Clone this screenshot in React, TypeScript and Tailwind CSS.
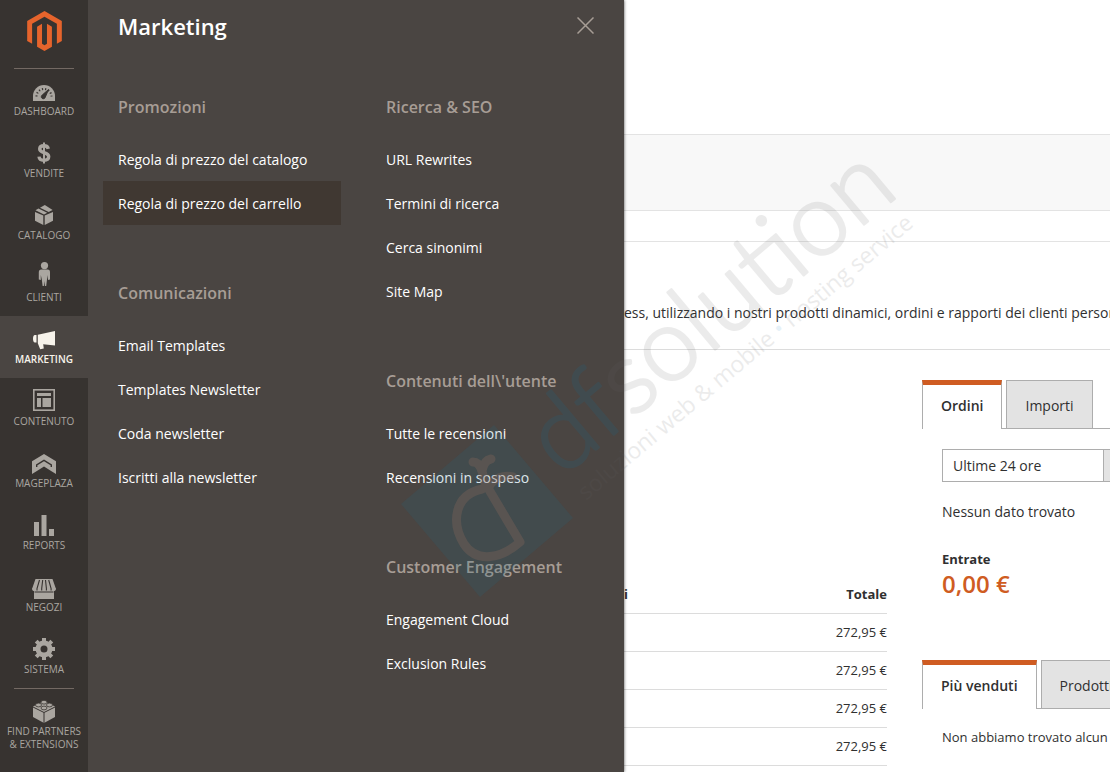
import React from 'react';
import { FaMagento } from 'react-icons/fa';

interface NavItem {
  label: string;
  icon: React.ReactNode;
  active?: boolean;
  divider?: boolean;
}

interface MenuGroup {
  title: string;
  items: string[];
}

// Sidebar glyphs, all drawn on the same 32x29 box
const icons = {
  dashboard: (
    <>
      <path fill="currentColor" d="M5 25v-5a11 11 0 0 1 22 0v5z" />
      <g fill="none" stroke="#373330">
        <path strokeWidth="2" strokeDasharray="1.2 2" d="M8.5 20.5a7.5 7.5 0 0 1 15 0" />
        <path fill="#373330" strokeWidth="1" d="M20.5 13.5l-6.3 5.6a2 2 0 1 0 3 2.3z" />
      </g>
    </>
  ),
  sales: (
    <>
      <path
        fill="none"
        stroke="currentColor"
        strokeWidth="3.4"
        d="M20.300 10.800c-.4-2-2-3-4.400-3-2.600 0-4.200 1.200-4.200 3.200 0 4.600 9 2.500 9 7.600 0 2.300-1.900 3.700-4.800 3.700-2.900 0-4.600-1.300-4.900-3.700"
      />
      <path stroke="currentColor" strokeWidth="2" d="M16 4.500v21" />
    </>
  ),
  catalog: (
    <g fill="currentColor">
      <path d="M7 12l8.300 3.600V25L7 20.800z" />
      <path d="M25 12l-8.300 3.600V25l8.300-4.200z" />
      <path d="M7.500 10.300l3-1.700 8.700 4.200-3.200 1.600z" />
      <path d="M12 7.700l4.800-2.700 7.800 4.900-3.900 2.100z" />
    </g>
  ),
  customers: (
    <g fill="currentColor">
      <circle cx="16.500" cy="3.600" r="3.600" />
      <path d="M13.500 7.500h6c2 0 2.500 1.300 2.500 3v7l-2 .5v-5l-1 4.500-.8 6.500h-1.300l-.5-5-.5 5h-1.300l-.8-6.500-1-4.500v5l-2-.5v-7c0-1.700.7-3 2.700-3z" />
    </g>
  ),
  marketing: (
    <g fill="currentColor">
      <path d="M9.800 10.800L27 7v14.500l-11.800-1.300.6 4.300-3.600.8-2.400-6z" />
      <path d="M8.500 11v7.500H6.800c-1 0-1.800-1.700-1.800-3.800s.8-3.700 1.800-3.700z" />
    </g>
  ),
  content: (
    <>
      <rect x="5.800" y="3.800" width="20.400" height="20.400" fill="none" stroke="currentColor" strokeWidth="1.600" />
      <path fill="currentColor" d="M9 7h14v3H9zM9 12h4v9H9zM14.500 12H23v9h-8.500z" />
    </>
  ),
  mageplaza: (
    <g fill="currentColor">
      <path d="M4 13.300L16 6l12 7.300V26l-4.500-2.700L16 18.600l-7.500 4.700L4 26z" />
      <path fill="none" stroke="#373330" strokeWidth="1.400" d="M8.700 19v-2.200L16 12.300l7.300 4.500V19" />
    </g>
  ),
  reports: <path fill="currentColor" d="M6 12h5v14H6zM13.500 5h5v21h-5zM21 19h5v7h-5z" />,
  stores: (
    <>
      <path fill="currentColor" d="M7.500 7h17L28 17h-2v10H6V17H4z" />
      <path
        fill="currentColor"
        d="M4 16.500h24c0 1.800-1 2.700-2.500 2.700S23 18 23 18s-1 1.200-2.400 1.200S18.300 18 18.300 18s-1 1.200-2.300 1.200S13.700 18 13.700 18s-1 1.200-2.300 1.200S9 18 9 18s-1 1.200-2.500 1.200S4 18.300 4 16.500z"
      />
      <path
        fill="none"
        stroke="#373330"
        strokeWidth="1.100"
        d="M11.500 8L9 16.500v2M14.700 8l-1 8.500v2M17.500 8l.9 8.500v2M20.700 8l2.400 8.500v2M6.500 20h19"
      />
    </>
  ),
  system: (
    <g>
      <circle cx="16" cy="15" r="6" fill="none" stroke="currentColor" strokeWidth="5" />
      <path
        stroke="currentColor"
        strokeWidth="4"
        d="M16 4v4M16 22v4M5 15h4M23 15h4M8.200 7.200l3 3M20.800 19.800l3 3M8.200 22.800l3-3M20.800 10.200l3-3"
      />
    </g>
  ),
  partners: (
    <>
      <path fill="currentColor" d="M5 10.500L16 5l11 5.500V21l-11 6-11-6z" />
      <path fill="none" stroke="#373330" d="M5 11l11 5.500L27 11M16 16.500V27" />
      <g fill="currentColor" stroke="#373330" strokeWidth=".8">
        <ellipse cx="16" cy="6.200" rx="3" ry="1.900" />
        <ellipse cx="10.500" cy="9" rx="3" ry="1.900" />
        <ellipse cx="21.500" cy="9" rx="3" ry="1.900" />
        <ellipse cx="16" cy="12" rx="3" ry="1.900" />
      </g>
    </>
  ),
};

const navItems: NavItem[] = [
  { label: 'Dashboard', icon: icons.dashboard, divider: true },
  { label: 'Vendite', icon: icons.sales },
  { label: 'Catalogo', icon: icons.catalog },
  { label: 'Clienti', icon: icons.customers },
  { label: 'Marketing', icon: icons.marketing, active: true },
  { label: 'Contenuto', icon: icons.content },
  { label: 'Mageplaza', icon: icons.mageplaza },
  { label: 'Reports', icon: icons.reports },
  { label: 'Negozi', icon: icons.stores },
  { label: 'Sistema', icon: icons.system },
  { label: 'Find Partners & Extensions', icon: icons.partners, divider: true },
];

const menuColumns: MenuGroup[][] = [
  [
    { title: 'Promozioni', items: ['Regola di prezzo del catalogo', 'Regola di prezzo del carrello'] },
    {
      title: 'Comunicazioni',
      items: ['Email Templates', 'Templates Newsletter', 'Coda newsletter', 'Iscritti alla newsletter'],
    },
  ],
  [
    { title: 'Ricerca & SEO', items: ['URL Rewrites', 'Termini di ricerca', 'Cerca sinonimi', 'Site Map'] },
    { title: "Contenuti dell\\'utente", items: ['Tutte le recensioni', 'Recensioni in sospeso'] },
    { title: 'Customer Engagement', items: ['Engagement Cloud', 'Exclusion Rules'] },
  ],
];

const currentItem = 'Regola di prezzo del carrello';
const orderTotals = ['272,95 €', '272,95 €', '272,95 €', '272,95 €'];

const Sidebar: React.FC = () => (
  <nav className="z-20 w-[88px] shrink-0 bg-[#373330]">
    <a href="#home" aria-label="Magento" className="flex h-[68px] justify-center pt-[11px] text-[#e6642c]">
      <FaMagento className="h-10 w-[35px]" />
    </a>
    {navItems.map((item) => (
      <a
        key={item.label}
        href={`#${item.label}`}
        className={`relative flex min-h-[62px] flex-col items-center pt-2 text-center text-[10px] leading-[13px] uppercase ${
          item.active ? 'bg-[#4a4542] font-semibold text-[#f7f3eb]' : 'text-[#aaa6a0]'
        }`}
      >
        {item.divider && <span className="absolute top-0 h-px w-[60px] bg-[#736963]" />}
        <svg viewBox="0 0 32 29" className="h-[29px] w-8" aria-hidden="true">
          {item.icon}
        </svg>
        <span className="w-20">{item.label}</span>
      </a>
    ))}
  </nav>
);

const MenuPanel: React.FC = () => (
  <section className="z-10 w-[536px] shrink-0 bg-[#4a4542] px-[15px] pt-[11px] text-white shadow-[0_0_3px_rgba(0,0,0,0.7)]">
    <header className="flex items-start justify-between px-[15px]">
      <h1 className="text-[22px] leading-[30px] font-semibold">Marketing</h1>
      <button type="button" aria-label="Chiudi" className="pt-1.5 text-[#a79d95]">
        <svg viewBox="0 0 17 17" className="size-[17px]" fill="none" stroke="currentColor" strokeWidth="1.500">
          <path d="M.5.5l16 16M16.500.5l-16 16" />
        </svg>
      </button>
    </header>
    <div className="mt-[54px] grid grid-cols-2 gap-[30px]">
      {menuColumns.map((groups, index) => (
        <div key={index} className="flex flex-col gap-14">
          {groups.map((group) => (
            <div key={group.title}>
              <h2 className="mb-[18px] px-[15px] text-base leading-6 font-semibold text-[#a79d95]">{group.title}</h2>
              <ul>
                {group.items.map((item) => (
                  <li key={item}>
                    <a
                      href="#menu"
                      className={`block px-[15px] pt-[13px] pb-[11px] text-sm leading-5 font-medium ${
                        item === currentItem ? 'bg-[#403832]' : ''
                      }`}
                    >
                      {item}
                    </a>
                  </li>
                ))}
              </ul>
            </div>
          ))}
        </div>
      ))}
    </div>
  </section>
);

const Tabs: React.FC<{ labels: string[] }> = ({ labels }) => (
  <div role="tablist" className="flex overflow-hidden whitespace-nowrap">
    {labels.map((label, index) =>
      index === 0 ? (
        <React.Fragment key={label}>
          <button
            type="button"
            role="tab"
            aria-selected="true"
            className="h-[49px] shrink-0 border-x border-t-5 border-x-[#adadad] border-t-[#cf5c22] px-[18px] pb-0.5 text-sm font-semibold"
          >
            {label}
          </button>
          <span className="w-1 shrink-0 border-b border-[#adadad]" />
        </React.Fragment>
      ) : (
        <button
          key={label}
          type="button"
          role="tab"
          aria-selected="false"
          className="h-[49px] shrink-0 border border-[#adadad] bg-[#e3e3e3] px-[18px] pt-0.5 text-sm"
        >
          {label}
        </button>
      ),
    )}
    <span className="flex-1 border-b border-[#adadad]" />
  </div>
);

const Page: React.FC = () => (
  <main className="min-w-0 flex-1 overflow-hidden text-[#303030]">
    <div className="mt-[134px] h-[77px] border-y border-[#e3e3e3] bg-[#f8f8f8]" />
    <div className="h-[31px] border-b border-[#e3e3e3]" />
    <p className="overflow-hidden border-b border-[#dcdcdc] pt-[61px] pb-[26px] text-sm leading-5 whitespace-nowrap">
      ess, utilizzando i nostri prodotti dinamici, ordini e rapporti dei clienti personalizzati.
    </p>
    <div className="flex gap-[35px] pt-[30px]">
      <div className="flex-1 pt-[195px]">
        <table className="w-full text-[13px] leading-5">
          <thead>
            <tr className="h-[38px] border-b border-[#dcdcdc]">
              <th className="text-left font-bold">i</th>
              <th className="text-right font-bold">Totale</th>
            </tr>
          </thead>
          <tbody>
            {orderTotals.map((total, index) => (
              <tr key={index} className="h-[38px] border-b border-[#dcdcdc]">
                <td />
                <td className="text-right">{total}</td>
              </tr>
            ))}
          </tbody>
        </table>
      </div>
      <div className="w-[188px] shrink-0">
        <Tabs labels={['Ordini', 'Importi']} />
        <div className="h-[231px] overflow-hidden pt-5 pl-5">
          <div className="flex h-[33px] w-[194px] border border-[#adadad]">
            <select aria-label="Periodo" className="w-40 shrink-0 appearance-none bg-white px-2.5 text-sm">
              <option>Ultime 24 ore</option>
            </select>
            <span className="flex-1 border-l border-[#adadad] bg-[#e3e3e3]" />
          </div>
          <p className="mt-5 text-sm leading-5">Nessun dato trovato</p>
          <p className="mt-[27px] text-[13px] leading-5 font-bold">Entrate</p>
          <p className="text-2xl leading-[30px] font-semibold text-[#cf5c22]">0,00 €</p>
        </div>
        <Tabs labels={['Più venduti', 'Prodotti più visti']} />
        <p className="overflow-hidden pt-[18px] pl-5 text-[13px] leading-5 whitespace-nowrap">
          Non abbiamo trovato alcun record.
        </p>
      </div>
    </div>
  </main>
);

const Watermark: React.FC = () => (
  <svg
    className="pointer-events-none absolute top-0 left-[400px] z-30 h-[620px] w-[530px]"
    viewBox="400 0 530 620"
    aria-hidden="true"
  >
    <path fill="#1d6a8a" fillOpacity=".17" d="M494 425l79 93-93 79-79-93z" />
    <path
      fill="none"
      stroke="#8f6a5c"
      strokeOpacity=".3"
      strokeWidth="9"
      strokeLinecap="round"
      strokeLinejoin="round"
      d="M473 462c4 0 7 3 9 9 1-6 4-11 9-12M482 471c1 6 3 12 6 17 6-11 16-13 25-11M488 488l32 54c-18 16-43 22-56 2-13-21-10-49 18-55"
    />
    <g opacity=".12" fill="#646464">
      <text
        transform="translate(562 478) rotate(-40)"
        className="font-['Lato'] text-[102px] font-light"
        stroke="#646464"
        strokeWidth="2.500"
        strokeLinejoin="round"
      >
        <tspan fill="#007ab0" stroke="#007ab0">
          df
        </tspan>
        solution
      </text>
      <text transform="translate(586 501) rotate(-40)" className="font-['Open_Sans'] text-[23px] font-normal">
        soluzioni web &amp; mobile <tspan fill="#3a93c8">•</tspan> hosting service
      </text>
    </g>
  </svg>
);

const App: React.FC = () => (
  <div className="relative flex min-h-screen overflow-hidden bg-white font-['Open_Sans','Noto_Sans',sans-serif]">
    <Sidebar />
    <MenuPanel />
    <Page />
    <Watermark />
  </div>
);

export default App;
